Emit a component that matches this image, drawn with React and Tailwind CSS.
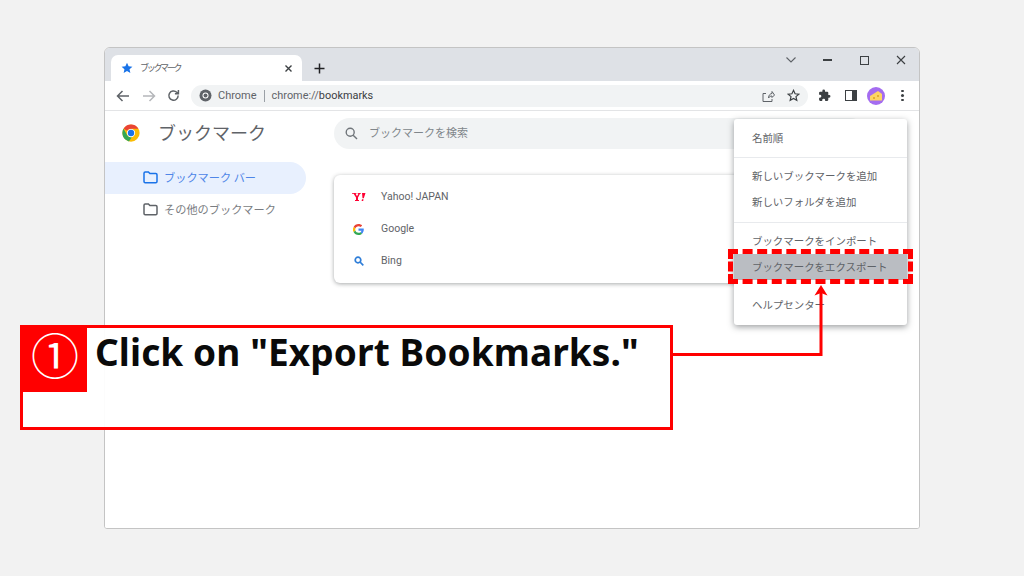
import React from "react";

const jp = { fontFamily: '"Noto Sans CJK JP", "Noto Sans", sans-serif' };

function ChromeLogo({ size = 18 }) {
  return (
    <svg width={size} height={size} viewBox="0 0 48 48">
      <circle cx="24" cy="24" r="23" fill="#fbbc04" />
      <path d="M24 1a23 23 0 0 1 19.900 11.500H24a11.500 11.500 0 0 0-10 5.800L4.100 12.500A23 23 0 0 1 24 1z" fill="#ea4335" />
      <path d="M4.100 12.500 14 29.800A11.500 11.500 0 0 0 26 35.300L18.600 46.400A23 23 0 0 1 4.100 12.500z" fill="#34a853" />
      <circle cx="24" cy="24" r="11" fill="#fff" />
      <circle cx="24" cy="24" r="8.500" fill="#1a73e8" />
    </svg>
  );
}

function Folder({ color }) {
  return (
    <svg width="15" height="13" viewBox="0 0 15 13" fill="none" stroke={color} strokeWidth="1.500">
      <path d="M1 2.200c0-.7.5-1.200 1.200-1.200h3.200l1.500 1.600h5.900c.7 0 1.200.5 1.200 1.200v6.800c0 .7-.5 1.200-1.200 1.200H2.200c-.7 0-1.200-.5-1.200-1.200z" />
    </svg>
  );
}

function MenuItem({ children, active }) {
  return (
    <div className={`h-[26px] pl-[18px] flex items-center text-[10.450px] text-[#5f6368] ${active ? "bg-[#babdc2]" : ""}`} style={jp}>
      {children}
    </div>
  );
}

function BookmarkRow({ icon, label }) {
  return (
    <div className="h-[32px] flex items-center">
      <div className="w-[47px] flex justify-center pl-[2px]">{icon}</div>
      <span className="text-[10.500px] text-[#5f6368]" style={{ fontFamily: '"Roboto", sans-serif' }}>{label}</span>
    </div>
  );
}

export default function App() {
  return (
    <div className="relative w-[1024px] h-[576px] overflow-hidden bg-[#f2f2f2] pt-[47px] pl-[104px]">
      <div className="w-[816px] h-[482px] flex flex-col overflow-hidden rounded-t-[6px] rounded-b-[3px] border border-[#c4c4c4] bg-white">
        {/* tab strip */}
        <div className="h-[33px] shrink-0 bg-[#dee1e6] flex items-end pl-[6px]">
          <div className="w-[191px] h-[26px] bg-white rounded-t-[7px] flex items-center pl-[10px] pr-[9px]">
            <svg width="12" height="12" viewBox="0 0 24 24" fill="#1a73e8"><path d="M12 1.500l3.200 7 7.600.8-5.700 5.100 1.600 7.500L12 18l-6.700 3.900 1.600-7.500L1.200 9.300l7.600-.8z" /></svg>
            <span className="ml-[7px] text-[9px] text-[#5f6368] tracking-[-2.300px]" style={jp}>ブックマーク</span>
            <svg className="ml-auto" width="9" height="9" viewBox="0 0 9 9" stroke="#3c4043" strokeWidth="1.400"><path d="M1.500 1.500l6 6M7.500 1.500l-6 6" /></svg>
          </div>
          <div className="w-[30px] h-[26px] ml-[2px] flex items-center justify-center">
            <svg width="11" height="11" viewBox="0 0 11 11" stroke="#202124" strokeWidth="1.500"><path d="M5.500 .5v10M.5 5.500h10" /></svg>
          </div>
          <div className="ml-auto h-[33px] flex items-center pb-[9px]">
            <svg width="10" height="6" viewBox="0 0 10 6" fill="none" stroke="#5f6368" strokeWidth="1.100"><path d="M.5.500 5 5l4.500-4.500" /></svg>
            <div className="w-[36.500px] ml-[14px] flex justify-center"><div className="w-[9px] h-[1.500px] bg-[#3c4043]" /></div>
            <div className="w-[36.500px] flex justify-center"><div className="w-[9px] h-[9px] border-[1.300px] border-[#3c4043]" /></div>
            <div className="w-[36.500px] flex justify-center">
              <svg width="10" height="10" viewBox="0 0 10 10" stroke="#3c4043" strokeWidth="1.100"><path d="M1 1l8 8M9 1l-8 8" /></svg>
            </div>
          </div>
        </div>
        {/* toolbar */}
        <div className="h-[30px] shrink-0 bg-white border-b border-[#e3e4e6] flex items-center">
          <div className="w-[86px] shrink-0 flex items-center pl-[11px]">
            <svg width="14" height="12" viewBox="0 0 14 12" fill="none" stroke="#5f6368" strokeWidth="1.500"><path d="M13 6H2M6.500 1 1.500 6l5 5" /></svg>
            <svg className="ml-[12px]" width="14" height="12" viewBox="0 0 14 12" fill="none" stroke="#b5b7ba" strokeWidth="1.500"><path d="M1 6h11M7.500 1l5 5-5 5" /></svg>
            <svg className="ml-[11px]" width="13" height="13" viewBox="0 0 14 14" fill="none" stroke="#5f6368" strokeWidth="1.600"><path d="M12 7a5 5 0 1 1-1.500-3.500L12 5M12.300 1.200V5H8.500" /></svg>
          </div>
          <div className="w-[617px] shrink-0 h-[22px] bg-[#f1f3f4] rounded-full flex items-center pl-[8px]">
            <svg width="13" height="13" viewBox="0 0 13 13">
              <circle cx="6.500" cy="6.500" r="6" fill="#5f6368" />
              <circle cx="6.500" cy="6.500" r="3" fill="#fff" />
              <circle cx="6.500" cy="6.500" r="2" fill="#5f6368" />
            </svg>
            <span className="ml-[6px] pt-[1px] text-[11px] text-[#5f6368]" style={{ fontFamily: '"Roboto", sans-serif' }}>Chrome</span>
            <div className="w-px h-[12px] bg-[#9aa0a6] ml-[7px]" />
            <span className="ml-[7px] pt-[1px] text-[10.900px] text-[#5f6368]" style={{ fontFamily: '"Roboto", sans-serif' }}>chrome://<span className="text-[#3c4043]">bookmarks</span></span>
            <svg className="ml-auto" width="13" height="12" viewBox="0 0 13 12" fill="none" stroke="#5f6368" strokeWidth="1"><path d="M4 3.500H1v8h9V9M6.500 8c0-3 2-4.500 3.500-4.500V1.500L12.500 5 10 7.500V6C8.500 6 7.500 6.500 6.500 8z" /></svg>
            <svg className="ml-[12px] mr-[8px]" width="13" height="13" viewBox="0 0 24 24" fill="none" stroke="#3c4043" strokeWidth="2.200"><path d="M12 2.500l2.900 6.300 6.900.7-5.200 4.600 1.500 6.800L12 17.400l-6.100 3.500 1.500-6.800-5.200-4.600 6.900-.7z" /></svg>
          </div>
          <div className="flex-1 flex items-center pl-[10px]">
            <svg width="13" height="13" viewBox="0 0 24 24" fill="#3c4043"><path d="M20.500 11H19V7a2 2 0 0 0-2-2h-4V3.500a2.500 2.500 0 0 0-5 0V5H4a2 2 0 0 0-2 2v3.800h1.500a2.700 2.700 0 0 1 0 5.400H2V20a2 2 0 0 0 2 2h3.800v-1.500a2.700 2.700 0 0 1 5.400 0V22H17a2 2 0 0 0 2-2v-4h1.500a2.500 2.500 0 0 0 0-5z" /></svg>
            <div className="ml-[14px] w-[12px] h-[11px] border-[1.500px] border-[#3c4043] flex justify-end"><div className="w-[4px] h-full bg-[#3c4043]" /></div>
            <div className="ml-[10px] w-[18px] h-[18px] rounded-full bg-[#a46cf0] flex items-center justify-center">
              <svg width="14" height="12" viewBox="0 0 14 12"><path d="M1 6l8-5 4 3v6.500H1z" fill="#fdd663" /><circle cx="5" cy="8" r="1" fill="#d9a520" /><circle cx="9" cy="6" r="1" fill="#d9a520" /></svg>
            </div>
            <div className="ml-[16px] flex flex-col gap-[2px]">
              <div className="w-[2.500px] h-[2.500px] rounded-full bg-[#3c4043]" />
              <div className="w-[2.500px] h-[2.500px] rounded-full bg-[#3c4043]" />
              <div className="w-[2.500px] h-[2.500px] rounded-full bg-[#3c4043]" />
            </div>
          </div>
        </div>
        {/* page */}
        <div className="flex-1 flex bg-white">
          <aside className="w-[229px] shrink-0">
            <div className="h-[51px] flex items-center pl-[17px] pb-[7px]">
              <ChromeLogo size={18} />
              <span className="ml-[18px] pb-[2px] text-[18px] text-[#5f6368]" style={jp}>ブックマーク</span>
            </div>
            <div className="w-[201px] h-[32px] bg-[#e8f0fe] rounded-r-full flex items-center pl-[38px] pb-[1px]">
              <Folder color="#1a73e8" />
              <span className="ml-[6px] pb-[1px] text-[11.200px] text-[#4f86e8]" style={jp}>ブックマーク バー</span>
            </div>
            <div className="h-[32px] flex items-center pl-[38px] pb-[1px]">
              <Folder color="#5f6368" />
              <span className="ml-[6px] pb-[1px] text-[11.200px] text-[#7a7d82]" style={jp}>その他のブックマーク</span>
            </div>
          </aside>
          <main className="flex-1 pr-[55px] pt-[7px]">
            <div className="h-[31px] w-[532px] bg-[#f1f3f4] rounded-full flex items-center pl-[11px]">
              <svg width="13" height="13" viewBox="0 0 13 13" fill="none" stroke="#70757a" strokeWidth="1.400"><circle cx="5.200" cy="5.200" r="4" /><path d="M8.200 8.200 12 12" /></svg>
              <span className="ml-[11px] pb-[2px] text-[11px] text-[#80868b]" style={jp}>ブックマークを検索</span>
            </div>
            <div className="mt-[26px] h-[108px] bg-white rounded-[6px] shadow-[0_1px_4px_rgba(60,64,67,0.45)] py-[6px]">
              <BookmarkRow
                label="Yahoo! JAPAN"
                icon={
                  <svg width="14" height="8" viewBox="0 0 14 8" fill="#ff0033">
                    <path d="M0 0h4.500v.8H3.600L5 3.300 6.400.8H5.600V0h3.300v.8H8L6 4.400V7h1v1H3V7h1V4.400L1.600.8H0z" />
                    <path d="M10 0h3.500L11.800 5.200h-1.300zM10 6.200h1.500L11.200 8H9.600z" />
                  </svg>
                }
              />
              <BookmarkRow
                label="Google"
                icon={
                  <svg width="11" height="11" viewBox="0 0 48 48">
                    <path fill="#EA4335" d="M24 9.500c3.500 0 6.700 1.200 9.200 3.600l6.900-6.900C35.900 2.400 30.500 0 24 0 14.600 0 6.500 5.400 2.600 13.200l8 6.200C12.400 13.700 17.700 9.500 24 9.500z" />
                    <path fill="#4285F4" d="M47 24.500c0-1.600-.2-3.100-.4-4.500H24v9h12.900c-.6 3-2.300 5.500-4.800 7.200l7.700 6C44.300 38 47 31.800 47 24.500z" />
                    <path fill="#FBBC05" d="M10.500 28.600a14.500 14.500 0 0 1 0-9.200l-8-6.200a24 24 0 0 0 0 21.600z" />
                    <path fill="#34A853" d="M24 48c6.500 0 11.900-2.100 15.900-5.800l-7.700-6c-2.200 1.400-4.900 2.300-8.200 2.300-6.300 0-11.600-4.200-13.500-9.900l-8 6.200C6.500 42.600 14.600 48 24 48z" />
                  </svg>
                }
              />
              <BookmarkRow
                label="Bing"
                icon={<svg width="10" height="10" viewBox="0 0 10 10" fill="none" stroke="#2f7ed8" strokeWidth="1.700"><circle cx="4" cy="4" r="2.800" /><path d="M6 6l3.300 3.300" /></svg>}
              />
            </div>
          </main>
        </div>
      </div>

      {/* menu */}
      <div className="absolute left-[734px] top-[119px] w-[173px] h-[206px] bg-white rounded-[3px] shadow-[0_2px_6px_rgba(60,64,67,0.5)]">
        <div className="h-[38px] flex items-center pl-[18px] pb-[1px] text-[10.450px] text-[#5f6368]" style={jp}>名前順</div>
        <div className="border-t border-[#e8eaed] pt-[5px] pb-[7px]">
          <MenuItem>新しいブックマークを追加</MenuItem>
          <MenuItem>新しいフォルダを追加</MenuItem>
        </div>
        <div className="border-t border-[#e8eaed] pt-[5px]">
          <MenuItem>ブックマークをインポート</MenuItem>
          <MenuItem active>ブックマークをエクスポート</MenuItem>
        </div>
        <div className="h-[45px] pt-[12px]">
          <MenuItem>ヘルプセンター</MenuItem>
        </div>
      </div>

      {/* dashed highlight */}
      <div className="absolute left-[728px] top-[249px] w-[185px] h-[35px] border-[5px] border-dashed border-[#ff0000]" />

      {/* connector */}
      <svg className="absolute left-[660px] top-[280px]" width="180" height="90" viewBox="0 0 180 90" fill="none">
        <path d="M12 74.500H161V10" stroke="#ff0000" strokeWidth="3" />
        <path d="M161 5 154.500 15.500 161 13 167.500 15.500z" fill="#ff0000" />
      </svg>

      {/* callout */}
      <div className="absolute left-[20px] top-[325px] w-[653px] h-[105px] border-[3px] border-[#ff0000] bg-white/95 flex items-start">
        <div className="w-[64px] h-[64px] bg-[#ff0000] flex items-center justify-center pb-[14px] text-white text-[48px] font-normal leading-none shrink-0" style={jp}>①</div>
        <div className="ml-[8px] text-[37px] tracking-[0.100px] leading-[48px] font-bold text-[#0a0a0a]" style={{ fontFamily: '"Noto Sans", sans-serif' }}>Click on "Export Bookmarks."</div>
      </div>
    </div>
  );
}
